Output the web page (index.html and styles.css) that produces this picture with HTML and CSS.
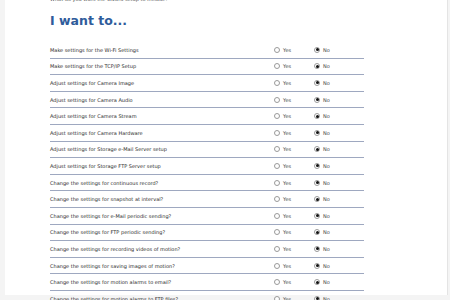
FILE: index.html
```html
<!DOCTYPE html>
<html>
<head>
<meta charset="utf-8">
<link rel="stylesheet" href="styles.css">
</head>
<body>
<div class="panel">
  <p class="intro">What do you want the wizard setup to include?</p>
  <h1 class="title">I want to...</h1>
  <div class="list">
    <div class="row"><span class="label">Make settings for the Wi-Fi Settings</span><span class="opt"><i class="radio"></i>Yes</span><span class="opt"><i class="radio on"></i>No</span></div>
    <div class="row"><span class="label">Make settings for the TCP/IP Setup</span><span class="opt"><i class="radio"></i>Yes</span><span class="opt"><i class="radio on"></i>No</span></div>
    <div class="row"><span class="label">Adjust settings for Camera Image</span><span class="opt"><i class="radio"></i>Yes</span><span class="opt"><i class="radio on"></i>No</span></div>
    <div class="row"><span class="label">Adjust settings for Camera Audio</span><span class="opt"><i class="radio"></i>Yes</span><span class="opt"><i class="radio on"></i>No</span></div>
    <div class="row"><span class="label">Adjust settings for Camera Stream</span><span class="opt"><i class="radio"></i>Yes</span><span class="opt"><i class="radio on"></i>No</span></div>
    <div class="row"><span class="label">Adjust settings for Camera Hardware</span><span class="opt"><i class="radio"></i>Yes</span><span class="opt"><i class="radio on"></i>No</span></div>
    <div class="row"><span class="label">Adjust settings for Storage e-Mail Server setup</span><span class="opt"><i class="radio"></i>Yes</span><span class="opt"><i class="radio on"></i>No</span></div>
    <div class="row"><span class="label">Adjust settings for Storage FTP Server setup</span><span class="opt"><i class="radio"></i>Yes</span><span class="opt"><i class="radio on"></i>No</span></div>
    <div class="row"><span class="label">Change the settings for continuous record?</span><span class="opt"><i class="radio"></i>Yes</span><span class="opt"><i class="radio on"></i>No</span></div>
    <div class="row"><span class="label">Change the settings for snapshot at interval?</span><span class="opt"><i class="radio"></i>Yes</span><span class="opt"><i class="radio on"></i>No</span></div>
    <div class="row"><span class="label">Change the settings for e-Mail periodic sending?</span><span class="opt"><i class="radio"></i>Yes</span><span class="opt"><i class="radio on"></i>No</span></div>
    <div class="row"><span class="label">Change the settings for FTP periodic sending?</span><span class="opt"><i class="radio"></i>Yes</span><span class="opt"><i class="radio on"></i>No</span></div>
    <div class="row"><span class="label">Change the settings for recording videos of motion?</span><span class="opt"><i class="radio"></i>Yes</span><span class="opt"><i class="radio on"></i>No</span></div>
    <div class="row"><span class="label">Change the settings for saving images of motion?</span><span class="opt"><i class="radio"></i>Yes</span><span class="opt"><i class="radio on"></i>No</span></div>
    <div class="row"><span class="label">Change the settings for motion alarms to email?</span><span class="opt"><i class="radio"></i>Yes</span><span class="opt"><i class="radio on"></i>No</span></div>
    <div class="row"><span class="label">Change the settings for motion alarms to FTP files?</span><span class="opt"><i class="radio"></i>Yes</span><span class="opt"><i class="radio on"></i>No</span></div>
  </div>
</div>
</body>
</html>
```
FILE: styles.css
```css
html, body {
  margin: 0;
  padding: 0;
  background: #f4f4f4;
  overflow: hidden;
  height: 300px;
}
.panel {
  margin-left: 5px;
  width: 443px;
  height: 300px;
  background: #ffffff;
  border-right: 1px solid #e4e4e4;
  padding-left: 45px;
  box-sizing: border-box;
  font-family: "DejaVu Sans", Verdana, sans-serif;
}
.intro {
  margin: -5px 0 0 0;
  height: 8px;
  line-height: 8px;
  font-size: 5px;
  color: #555;
}
.title {
  margin: 10px 0 0 0;
  height: 16px;
  line-height: 16px;
  font-size: 12.5px;
  font-weight: bold;
  color: #2f5c9b;
}
.list {
  margin-top: 13px;
  width: 314px;
}
.row {
  display: grid;
  grid-template-columns: 224px 40px 1fr;
  align-items: center;
  height: 15.6px;
  border-bottom: 1px solid #9ea8c0;
  font-size: 5px;
  color: #2a2a2a;
}
.label {
  white-space: nowrap;
}
.opt {
  display: flex;
  align-items: center;
  gap: 3px;
  color: #444;
}
.radio {
  display: inline-block;
  width: 6px;
  height: 6px;
  box-sizing: border-box;
  border: 1px solid #9a9a9a;
  border-radius: 50%;
  background: #fff;
  position: relative;
}
.radio.on::after {
  content: "";
  position: absolute;
  left: 0.5px;
  top: 0.5px;
  width: 3px;
  height: 3px;
  border-radius: 50%;
  background: #111;
}
```
